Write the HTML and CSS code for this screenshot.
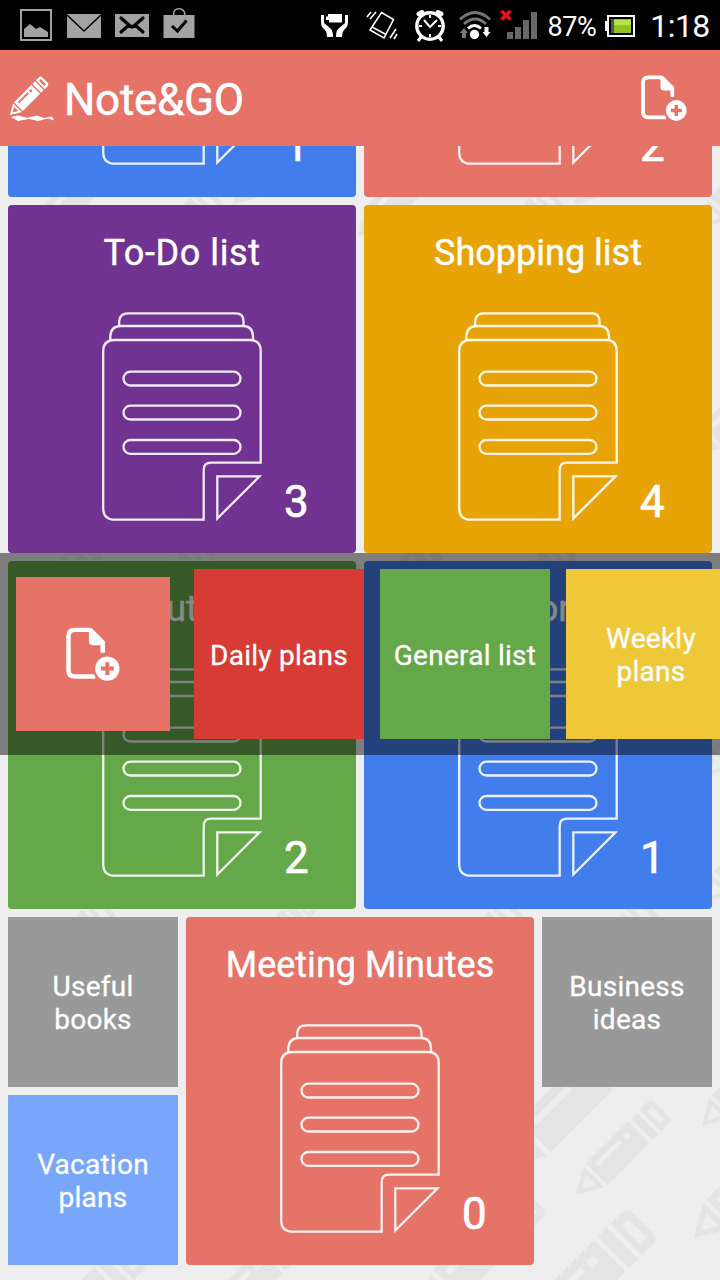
FILE: index.html
```html
<!DOCTYPE html>
<html lang="en">
<head>
  <meta charset="UTF-8" />
  <meta name="viewport" content="width=device-width, initial-scale=1" />
  <title>Note&amp;GO</title>
  <link rel="stylesheet" href="styles.css">
</head>
<body>
  <!-- shared shapes -->
  <svg class="defs" width="0" height="0">
    <symbol id="pencil" viewBox="0 0 110 110" overflow="visible">
      <g transform="translate(0 110) rotate(-45)">
        <path fill-rule="evenodd" d="M0 0L29 -17V17ZM10 0L24 8V-8Z"/>
        <path fill-rule="evenodd" d="M33 -17H100V17H33ZM40 -10V-5H78V-10ZM84 -10V-3H91V-10Z"/>
        <path d="M104 -17h10v34h-10z"/>
        <path fill-rule="evenodd" d="M118 -17H129Q136 -17 136 -10V10Q136 17 129 17H118ZM123 -10V10H130V-10Z"/>
      </g>
    </symbol>
    <symbol id="note" viewBox="94 107 160 210">
      <g fill="none" stroke="#fff" stroke-opacity=".9" stroke-width="2.3">
        <path d="M111.200 121V116Q111.700 108.300 120 108.300H228Q235.500 108.300 235.500 116V121"/>
        <path d="M102.300 135V131Q103 121 113 121H235Q244.500 121 245 131V135"/>
        <path d="M252.700 257.700V146Q252.700 135 242 135H107Q95.200 135 95.200 146V303Q95.200 314.700 107 314.700H195.700V265Q195.700 257.700 203 257.700H253.800"/>
        <path d="M209.300 271.300H251.500L209.300 313.500Z"/>
        <rect x="115.500" y="166.700" width="117" height="13.800" rx="6.900"/>
        <rect x="115.500" y="200.700" width="117" height="13.800" rx="6.900"/>
        <rect x="115.500" y="235" width="117" height="13.800" rx="6.900"/>
      </g>
    </symbol>
    <symbol id="add-file" viewBox="640 74 48 48">
      <path fill="none" stroke="#fff" stroke-width="3.800" d="M666 117.300H648.500Q643 117.300 643 112V82.500Q643 77.300 648.500 77.300H661L672.300 88V97"/>
      <path fill="#fff" d="M660.500 76H663L674 87V90.500H664Q660.500 90.500 660.500 87Z"/>
      <circle cx="676.300" cy="110.500" r="12.300" fill="#e57368"/>
      <circle cx="676.300" cy="110.500" r="10.400" fill="#fff"/>
      <path stroke="#e57368" stroke-width="3.400" d="M670.800 110.500h11M676.300 105v11"/>
    </symbol>
  </svg>

  <div class="status-bar">
    <div class="status-left">
      <svg width="33" height="34" viewBox="20 8 33 34"><rect x="21" y="10" width="30" height="30" fill="none" stroke="#a3a3a3" stroke-width="2"/><path fill="#a3a3a3" d="M24 37V29L30 24L36 29L40 27L48 32V37Z"/></svg>
      <svg width="34" height="34" viewBox="67 8 34 34"><path fill="#a3a3a3" d="M67 14H101V38H67Z"/><path fill="none" stroke="#000" stroke-width="1.500" d="M67 15L84 31L101 15"/></svg>
      <svg width="34" height="34" viewBox="115 8 34 34"><path fill="#a3a3a3" d="M115 14H149V37H115Z"/><path fill="none" stroke="#000" stroke-width="3.200" stroke-linecap="round" d="M121 18L129 25L132 27L135 25L143 18M121 32L129 25M143 32L135 25"/></svg>
      <svg width="32" height="34" viewBox="163.500 8 32 34"><path fill="#a3a3a3" d="M164 15H195V38H164Z"/><path fill="none" stroke="#a3a3a3" stroke-width="1.500" d="M174 15Q174 8.800 179.500 8.800T185.500 15"/><path fill="none" stroke="#000" stroke-width="3" d="M172.500 26L178 31L187 20.500"/></svg>
    </div>
    <div class="status-right">
      <svg width="45" height="50" viewBox="316 0 45 50"><g fill="#fff"><path d="M328 14H342V22.500H329V20H326V16.500H328Z"/><path d="M321 15H324V23L331 29Q333 31 333 37H327Q327 31 323 28Q321 26 321 22Z"/><path d="M348 15H345V23L338 29Q336 31 336 37H342Q342 31 346 28Q348 26 348 22Z"/></g></svg>
      <svg width="47" height="50" viewBox="361 0 47 50"><g fill="none" stroke="#fff" stroke-width="1.600"><path d="M381.500 12.500L393.500 19.500L384 38L370 30ZM372 27L386 34.500"/><path d="M371 12L367 17M376 12L370 19M390 38L396 29M394 39L397 34"/></g></svg>
      <svg width="44" height="50" viewBox="408 0 44 50"><g fill="none" stroke="#fff"><circle cx="430" cy="26" r="13.200" stroke-width="3.400"/><path stroke-width="5" stroke-linecap="round" d="M419 14L422 12.500M441 14L438 12.500"/><path stroke-width="3" d="M421 37L418 41M439 37L442 41"/><path stroke-width="2" d="M424 20L430 27L437 20M430 15V18M430 34V37M419 26H422M438 26H441"/></g></svg>
      <svg width="44" height="50" viewBox="452 0 44 50"><g fill="none" stroke="#777" stroke-width="2.800"><path d="M460 19.500Q475 5.500 490 19.500M464 24Q475 14 486 24"/><path stroke="#fff" d="M468 28.500Q474.500 22.500 481 28.500"/></g><circle cx="474.500" cy="34.500" r="4.700" fill="#fff"/><path fill="#777" d="M464 28L468 33H466V38H462V33H460Z"/><path fill="#fff" d="M484.500 27H488.500V32H490.500L486.500 37L482.500 32H484.500Z"/></svg>
      <svg width="46" height="50" viewBox="496 0 46 50"><path fill="#686868" d="M507 32h6v7h-6zM515 27h6v12h-6zM523 20h6v19h-6zM531 12h6v27h-6z"/><path stroke="#f00f1c" stroke-width="3.600" d="M501.500 11L510.500 19.500M510.500 11L501.500 19.500"/></svg>
      <span class="percent">87%</span>
      <svg width="38" height="50" viewBox="602 0 38 50"><path fill="none" stroke="#fff" stroke-width="2" d="M608 16H634V36H608Z"/><path fill="#fff" d="M605 21h3v10h-3z"/><path fill="#555" d="M611 19h3v14h-3z"/><path fill="#8fc41e" d="M614 19h17v14h-17z"/><path fill="#b5e34a" d="M614 20h17v5h-17z"/></svg>
      <span class="time">1:18</span>
    </div>
  </div>

  <header>
    <div class="brand">
      <svg class="logo" viewBox="8 72 48 52" fill="#fff">
        <use href="#pencil" x="10" y="75" width="40" height="40"/>
        <path d="M11 117L18 115.500L27 117.800L37 115.500L44 118L52 116.500L54 120.500L48 118.500L38 121L29 119L18 121Z"/>
      </svg>
      <h1>Note&amp;GO</h1>
    </div>
    <svg class="add-icon"><use href="#add-file"/></svg>
  </header>

  <main>
    <svg class="backdrop" viewBox="0 146 720 1134" fill="#e4e4e4">
      <use href="#pencil" x="20" y="150" width="100" height="100"/>
      <use href="#pencil" x="130" y="182" width="96" height="96"/>
      <use href="#pencil" x="233" y="112" width="92" height="92"/>
      <use href="#pencil" x="358" y="136" width="100" height="100"/>
      <use href="#pencil" x="470" y="182" width="96" height="96"/>
      <use href="#pencil" x="574" y="112" width="92" height="92"/>
      <use href="#pencil" x="700" y="132" width="96" height="96"/>
      <use href="#pencil" x="692" y="360" width="96" height="96"/>
      <use href="#pencil" x="20" y="520" width="100" height="100"/>
      <use href="#pencil" x="120" y="534" width="100" height="100"/>
      <use href="#pencil" x="360" y="520" width="100" height="100"/>
      <use href="#pencil" x="480" y="534" width="100" height="100"/>
      <use href="#pencil" x="706" y="680" width="96" height="96"/>
      <use href="#pencil" x="20" y="894" width="100" height="100"/>
      <use href="#pencil" x="240" y="890" width="80" height="80"/>
      <use href="#pencil" x="420" y="894" width="110" height="110"/>
      <use href="#pencil" x="548" y="894" width="120" height="120"/>
      <use href="#pencil" x="704" y="806" width="96" height="96"/>
      <use href="#pencil" x="504" y="1022" width="145" height="145"/>
      <use href="#pencil" x="576" y="1097" width="98" height="98"/>
      <use href="#pencil" x="702" y="1030" width="96" height="96"/>
      <use href="#pencil" x="420" y="1182" width="130" height="130"/>
      <use href="#pencil" x="518" y="1205" width="143" height="143"/>
      <use href="#pencil" x="694" y="1118" width="120" height="120"/>
      <use href="#pencil" x="200" y="1222" width="110" height="110"/>
      <use href="#pencil" x="30" y="1238" width="120" height="120"/>
    </svg>

    <div class="board">
      <div class="tile blue">
        <h2></h2>
        <div class="tile-body"><svg class="note"><use href="#note"/></svg><span class="count">1</span></div>
      </div>
      <div class="tile salmon">
        <h2></h2>
        <div class="tile-body"><svg class="note"><use href="#note"/></svg><span class="count">2</span></div>
      </div>
      <div class="tile purple">
        <h2 class="spaced">To-Do list</h2>
        <div class="tile-body"><svg class="note"><use href="#note"/></svg><span class="count">3</span></div>
      </div>
      <div class="tile amber">
        <h2>Shopping list</h2>
        <div class="tile-body"><svg class="note"><use href="#note"/></svg><span class="count">4</span></div>
      </div>
      <div class="tile green">
        <h2>ut</h2>
        <div class="tile-body"><svg class="note"><use href="#note"/></svg><span class="count">2</span></div>
      </div>
      <div class="tile blue">
        <h2 class="shifted">or</h2>
        <div class="tile-body"><svg class="note"><use href="#note"/></svg><span class="count">1</span></div>
      </div>
      <div class="small grey">Useful books</div>
      <div class="tile salmon">
        <h2>Meeting Minutes</h2>
        <div class="tile-body"><svg class="note"><use href="#note"/></svg><span class="count">0</span></div>
      </div>
      <div class="small grey">Business ideas</div>
      <div class="small light-blue">Vacation plans</div>
    </div>
  </main>

  <div class="ribbon">
    <div class="add-tile"><svg><use href="#add-file"/></svg></div>
    <div class="ribbon-list">
      <div class="small red">Daily plans</div>
      <div class="small green">General list</div>
      <div class="small yellow">Weekly plans</div>
    </div>
  </div>
</body>
</html>
```
FILE: styles.css
```css
* {
  box-sizing: border-box;
}

body {
  margin: 0;
  height: 1280px;
  display: flex;
  flex-direction: column;
  position: relative;
  overflow: hidden;
  background-color: #eee;
  color: #fff;
  font-family: Roboto, sans-serif;
}

svg {
  display: block;
  flex-shrink: 0;
}

.defs {
  position: absolute;
}

.status-bar {
  height: 50px;
  flex-shrink: 0;
  display: flex;
  align-items: center;
  justify-content: space-between;
  background-color: #000;
}

.status-left {
  display: flex;
  gap: 14px;
  padding-left: 20px;
}

.status-right {
  display: flex;
  align-items: center;
}

.percent {
  width: 60px;
  padding-top: 3px;
  text-align: center;
  font-size: 27px;
  letter-spacing: -0.3px;
}

.time {
  width: 80px;
  padding-top: 2px;
  text-align: center;
  font-size: 32px;
  letter-spacing: -0.5px;
}

header {
  height: 96px;
  flex-shrink: 0;
  display: flex;
  align-items: center;
  justify-content: space-between;
  padding: 0 32px 0 8px;
  background-color: #e57368;
}

.brand {
  display: flex;
  align-items: center;
  gap: 8px;
}

.logo {
  width: 48px;
  height: 52px;
}

h1 {
  margin: 4px 0 0;
  font-size: 44px;
  line-height: 52px;
  font-weight: 400;
  letter-spacing: -0.3px;
  -webkit-text-stroke: 0.5px #fff;
}

.add-icon {
  width: 48px;
  height: 48px;
}

main {
  flex: 1;
  min-height: 0;
  display: flex;
  flex-direction: column;
  justify-content: flex-end;
  position: relative;
  overflow: hidden;
  padding: 0 8px 15px;
}

.backdrop {
  position: absolute;
  top: 0;
  left: 0;
  width: 720px;
  height: 1134px;
}

.board {
  position: relative;
  display: grid;
  grid-template-columns: repeat(4, 170px);
  grid-auto-rows: 170px;
  gap: 8px;
}

.tile {
  grid-column: span 2;
  grid-row: span 2;
  padding-top: 30px;
  border-radius: 4px;
}

.tile h2 {
  height: 36px;
  margin: 0 0 41px;
  font-size: 36px;
  line-height: 36px;
  font-weight: 400;
  text-align: center;
  -webkit-text-stroke: 0.4px #fff;
}

.tile h2.spaced {
  letter-spacing: 0.6px;
}

.tile h2.shifted {
  padding-left: 32px;
}

.tile-body {
  display: flex;
  align-items: flex-end;
  gap: 22px;
  padding-left: 94px;
}

.note {
  width: 160px;
  height: 210px;
}

.count {
  font-size: 44px;
  line-height: 44px;
  margin-bottom: -2px;
  -webkit-text-stroke: 0.7px #fff;
}

.small {
  width: 170px;
  height: 170px;
  flex-shrink: 0;
  display: flex;
  align-items: center;
  justify-content: center;
  padding: 2px 12px 0;
  font-size: 28px;
  line-height: 33px;
  letter-spacing: 0.25px;
  text-align: center;
  -webkit-text-stroke: 0.3px #fff;
}

.board .small {
  padding: 2px 24px 0;
}

.ribbon {
  position: absolute;
  top: 553px;
  left: 0;
  width: 720px;
  height: 202px;
  display: flex;
  align-items: center;
  gap: 24px;
  padding: 0 0 0 16px;
  overflow: hidden;
  background-color: rgba(0, 0, 0, 0.47);
}

.add-tile {
  width: 154px;
  height: 154px;
  flex-shrink: 0;
  display: flex;
  align-items: center;
  justify-content: center;
  background-color: #e57368;
}

.add-tile svg {
  width: 56px;
  height: 56px;
}

.ribbon-list {
  display: flex;
  gap: 16px;
}

.ribbon .yellow {
  padding: 2px 30px 0;
}

.blue { background-color: #427eeb; }
.salmon { background-color: #e57368; }
.purple { background-color: #703391; }
.amber { background-color: #e8a407; }
.green { background-color: #64a84a; }
.grey { background-color: #999; }
.light-blue { background-color: #77a6fb; }
.red { background-color: #d63c33; }
.yellow { background-color: #efc839; }
```
